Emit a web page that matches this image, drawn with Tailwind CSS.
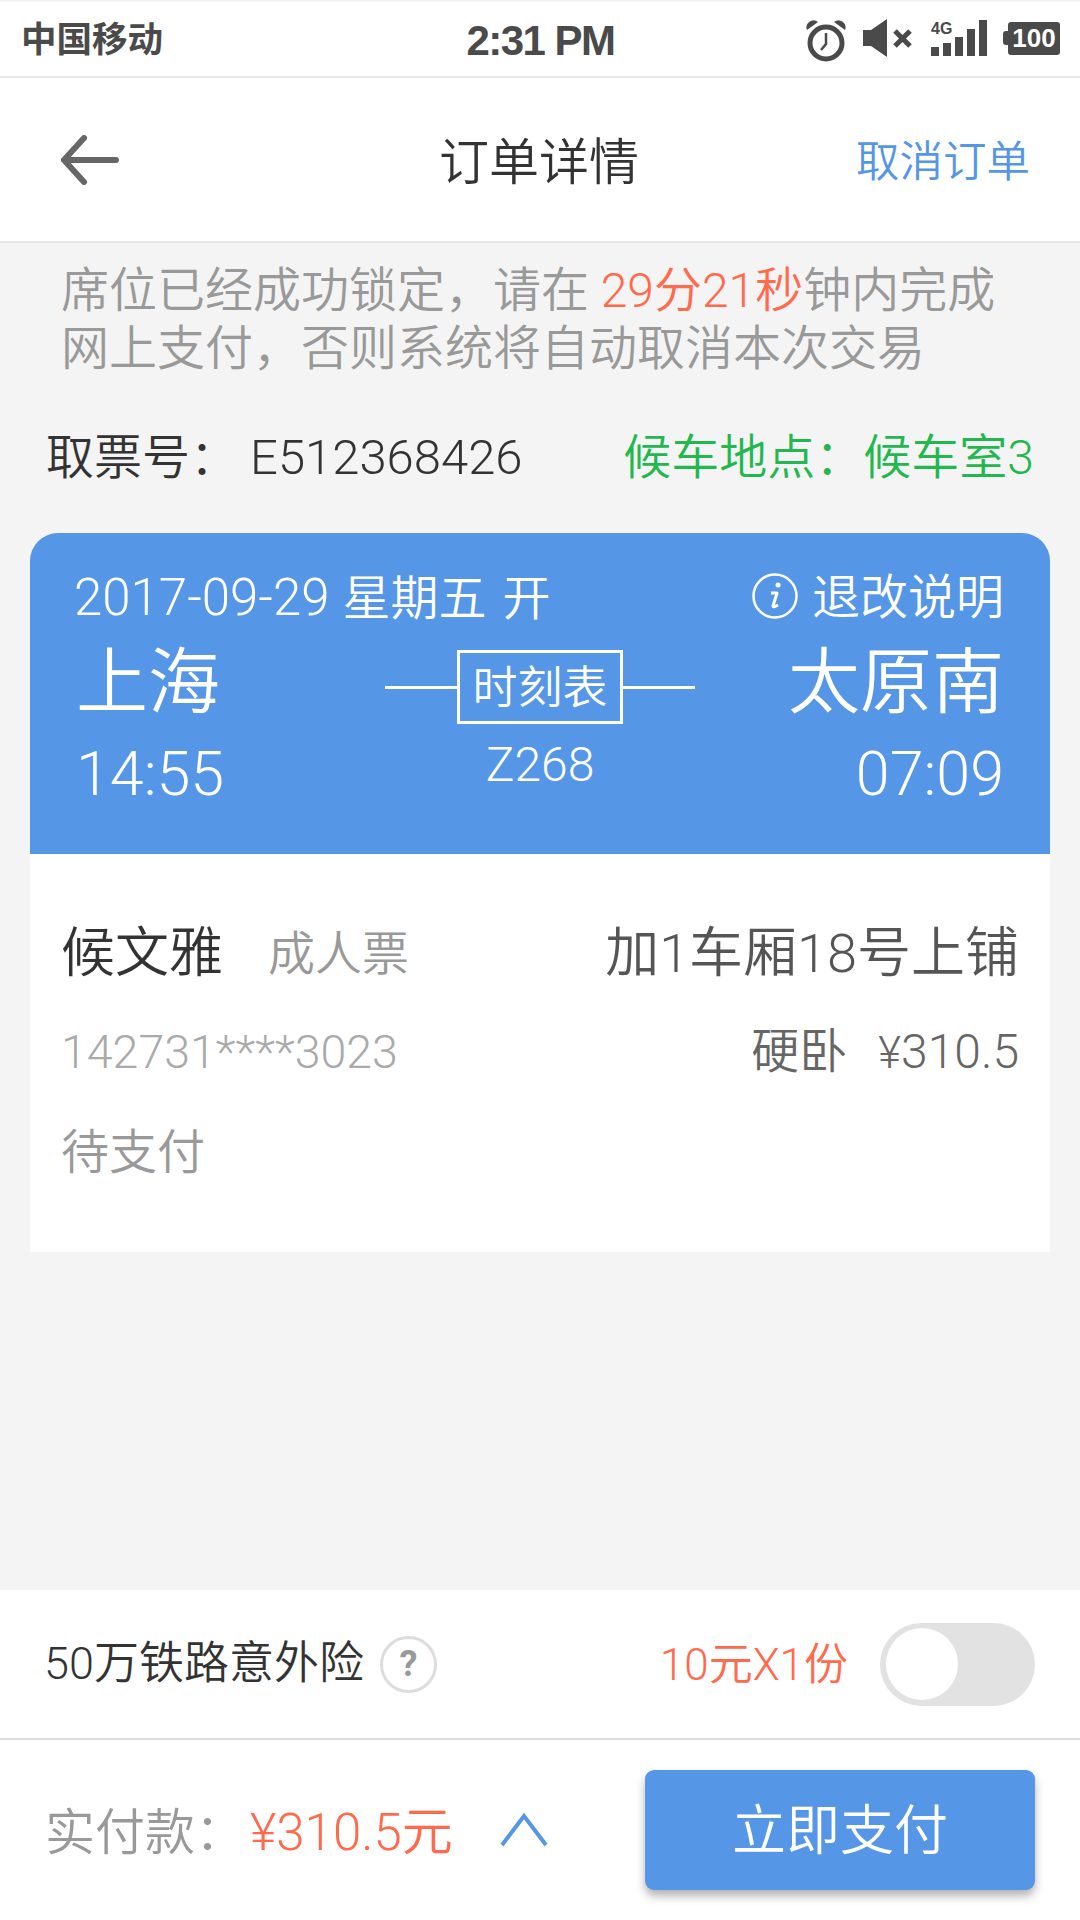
<!DOCTYPE html>
<html lang="zh-CN">

<head>
	<meta charset="UTF-8" />
	<meta name="viewport" content="width=device-width, initial-scale=1.0" />
	<script src="https://cdn.jsdelivr.net/npm/@tailwindcss/browser@4"></script>
	<title>订单详情</title>
</head>

<body class="bg-[#f4f4f4] font-['Roboto','Noto_Sans_CJK_SC',sans-serif] font-[350]">
	<main class="flex flex-col w-[1080px] h-[1920px] overflow-hidden">
		<!-- status bar -->
		<div class="flex items-center justify-between h-[78px] shrink-0 bg-white shadow-[inset_0_3px_3px_-2px_rgba(0,0,0,0.08)] border-b-2 border-[#e9e9e9] pl-[21px] pr-[20px] text-[#4a4a4a] font-['Liberation_Sans','Noto_Sans_CJK_SC',sans-serif]">
			<span class="w-[300px] text-[35.5px] leading-[40px] font-bold pt-[4px]">中国移动</span>
			<span class="text-[42px] leading-[40px] font-bold tracking-[-1.5px] pt-[6px]">2:31 PM</span>
			<div class="w-[300px] flex items-center justify-end">
				<svg width="42" height="44" viewBox="0 0 42 44" class="mr-[15px] translate-y-[2px] -translate-x-[1px]" fill="none" stroke="#4a4a4a">
					<circle cx="21" cy="25" r="16" stroke-width="5" />
					<path d="M21 15v11l-5 6" stroke-width="2.5" />
					<path d="M2 12a7 7 0 0 1 11-8zM40 12a7 7 0 0 0-11-8z" fill="#4a4a4a" stroke="none" />
				</svg>
				<svg width="51" height="38" viewBox="0 0 51 38" class="mr-[17px]">
					<path d="M0 11h8L24 0v38L8 27H0z" fill="#4a4a4a" />
					<path d="M32 12l15 15M47 12L32 27" stroke="#4a4a4a" stroke-width="5" fill="none" />
				</svg>
				<svg width="56" height="42" viewBox="0 0 56 42" class="mr-[16px]" fill="#4a4a4a">
					<text x="0" y="17" font-size="16" font-weight="700">4G</text>
					<rect x="0" y="30" width="8" height="9" />
					<rect x="12" y="26" width="8" height="13" />
					<rect x="24" y="20" width="8" height="19" />
					<rect x="36" y="12" width="8" height="27" />
					<rect x="48" y="3" width="8" height="36" />
				</svg>
				<div class="flex items-center">
					<span class="w-[5px] h-[14px] bg-[#4a4a4a] rounded-l-[3px]"></span>
					<span class="w-[52px] h-[33px] bg-[#4a4a4a] rounded-[3px] text-white text-[26px] leading-[33px] font-bold text-center">100</span>
				</div>
			</div>
		</div>

		<!-- nav -->
		<nav class="flex items-center justify-between h-[165px] shrink-0 bg-white border-b-2 border-[#e6e6e6] px-[50px] pt-[6px]">
			<div class="flex-1 mt-[-6px] pl-[10px]">
				<svg width="60" height="50" viewBox="0 0 60 50" fill="none" stroke="#666" stroke-width="6" stroke-linecap="round" stroke-linejoin="round">
					<path d="M56 25H4M24 3L4 25l20 22" />
				</svg>
			</div>
			<h1 class="mr-[12px] text-[50px] leading-[60px] font-[350] text-[#333]">订单详情</h1>
			<div class="flex-1 text-right"><a class="text-[43.5px] leading-[60px] text-[#5596e6]">取消订单</a></div>
		</nav>

		<!-- notice -->
		<p class="pl-[61px] pt-[19px] text-[48px] leading-[58px] text-[#999]">席位已经成功锁定，请在 <span class="text-[#ff6a4d]">29分21秒</span>钟内完成<br />网上支付，否则系统将自动取消本次交易</p>

		<div class="flex items-center justify-between mt-[51px] pl-[46px] pr-[46px] text-[48px] leading-[58px]">
			<p class="text-[#333]"><span>取票号：</span><span class="ml-[12px] text-[49px]">E512368426</span></p>
			<p class="text-[#22b84f]">候车地点：候车室3</p>
		</div>

		<!-- ticket -->
		<section class="mx-[30px] mt-[46px]">
			<div class="h-[321px] bg-[#5596e6] rounded-t-[28px] px-[46px] pt-[36px] text-white">
				<div class="flex items-center justify-between h-[58px] text-[48px]">
					<p class="ml-[-2px]"><span class="text-[51px]">2017-09-29</span><span class="ml-[13px]">星期五</span><span class="ml-[16px]">开</span></p>
					<div class="flex items-center gap-[14px]">
						<svg width="46" height="46" viewBox="0 0 46 46" class="-translate-y-[2px]" fill="none" stroke="#fff">
							<circle cx="23" cy="23" r="21.5" stroke-width="2.5" />
							<path d="M26 12h.1" stroke-width="5" stroke-linecap="round" />
							<path d="M19 20h6l-4 13q0 2 5-1" stroke-width="3" stroke-linejoin="round" />
						</svg>
						<span>退改说明</span>
					</div>
				</div>
				<div class="grid grid-cols-3">
					<div class="flex flex-col">
						<span class="text-[72px] leading-[90px] mt-[11px]">上海</span>
						<span class="text-[61px] leading-[70px] mt-[11px]">14:55</span>
					</div>
					<div class="flex flex-col items-center">
						<div class="flex items-center mt-[23px]">
							<span class="w-[72px] h-[3px] bg-white"></span>
							<span class="w-[166px] h-[74px] border-[3px] border-white text-[45px] leading-[72px] text-center">时刻表</span>
							<span class="w-[72px] h-[3px] bg-white"></span>
						</div>
						<span class="text-[48px] leading-[58px] mt-[12px]">Z268</span>
					</div>
					<div class="flex flex-col items-end">
						<span class="text-[72px] leading-[90px] mt-[11px]">太原南</span>
						<span class="text-[61px] leading-[70px] mt-[11px]">07:09</span>
					</div>
				</div>
			</div>
			<div class="h-[398px] bg-white pl-[31px] pr-[31px] pt-[66px]">
				<div class="flex items-center justify-between h-[66px]">
					<p class="flex items-center"><span class="text-[54px] text-[#333]">候文雅</span><span class="text-[47px] ml-[45px] mt-[3px] text-[#999]">成人票</span></p>
					<p class="text-[54px] text-[#555]">加1车厢18号上铺</p>
				</div>
				<div class="flex items-center justify-between h-[58px] mt-[37px] text-[48px] leading-[58px]">
					<p class="text-[#aaa] text-[46.5px]">142731****3023</p>
					<p class="text-[#666]">硬卧<span class="ml-[31px] text-[44px]">¥</span>310.5</p>
				</div>
				<p class="text-[48px] leading-[58px] mt-[43px] text-[#999]">待支付</p>
			</div>
		</section>

		<div class="grow"></div>

		<!-- insurance -->
		<div class="flex items-center justify-between h-[148px] shrink-0 bg-white pl-[44px] pr-[45px]">
			<div class="flex items-center">
				<span class="text-[45px] text-[#333]">50万铁路意外险</span>
				<span class="ml-[16px] w-[57px] h-[57px] rounded-full border-[3px] border-[#ddd] text-[36px] leading-[50px] font-bold text-center text-[#999]">?</span>
			</div>
			<div class="flex items-center">
				<span class="text-[44px] text-[#ff6a4d] pt-[2px]">10元X1份</span>
				<span class="ml-[32px] flex items-center w-[155px] h-[83px] rounded-full bg-[#e2e2e2] pl-[6px]">
					<span class="w-[72px] h-[72px] rounded-full bg-white"></span>
				</span>
			</div>
		</div>

		<!-- pay -->
		<div class="flex items-center justify-between h-[182px] shrink-0 bg-white border-t-2 border-[#ddd] pl-[45px] pr-[45px]">
			<div class="flex items-center text-[50px]">
				<span class="text-[#999] pt-[6px]">实付款：</span>
				<span class="ml-[5px] pt-[6px] text-[51px] text-[#ff6a4d]">¥310.5元</span>
				<svg width="48" height="36" viewBox="0 0 48 36" class="ml-[47px]" fill="none" stroke="#5596e6" stroke-width="4">
					<path d="M2 33L24 4l22 29" />
				</svg>
			</div>
			<button class="w-[390px] h-[120px] bg-[#5596e6] rounded-[9px] shadow-[0_6px_10px_rgba(0,0,0,0.3)] text-white text-[54px] pt-[3px]">立即支付</button>
		</div>
	</main>
</body>

</html>
